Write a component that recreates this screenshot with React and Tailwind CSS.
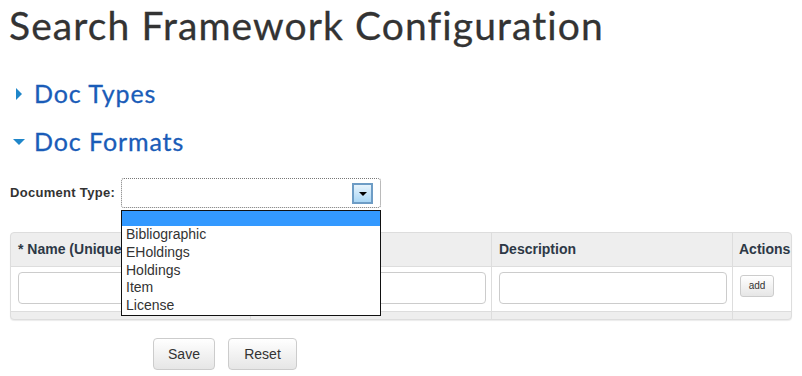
import React from 'react';

const items = ['Bibliographic', 'EHoldings', 'Holdings', 'Item', 'License'];

function Section({ open, label }) {
  return (
    <div className="flex items-center h-[48px] pl-[13px]">
      {open ? (
        <span className="w-0 h-0 border-l-[6px] border-r-[6px] border-t-[6px] border-l-transparent border-r-transparent border-t-[#1f86c9] mr-[9px]" />
      ) : (
        <span className="w-0 h-0 border-t-[6px] border-b-[6px] border-l-[6px] border-t-transparent border-b-transparent border-l-[#1f86c9] ml-[3px] mr-[12px]" />
      )}
      <span className="font-['Lato'] text-[25px] text-[#1a5cb8] tracking-[0.9px] [-webkit-text-stroke:0.3px_#1a5cb8]">{label}</span>
    </div>
  );
}

export default function App() {
  return (
    <div className="relative w-[802px] h-[376px] overflow-hidden bg-white font-['Liberation_Sans',Arial,sans-serif]">
      <h1 className="h-[70px] pl-[9px] pt-[1px] font-['Lato'] text-[39px] leading-[48px] text-[#333] tracking-[1.1px] [-webkit-text-stroke:0.3px_#333]">
        Search Framework Configuration
      </h1>
      <Section label="Doc Types" />
      <Section open label="Doc Formats" />

      <div className="flex items-center h-[30px] mt-[12px] pl-[10px]">
        <label className="w-[111px] text-[13px] font-bold tracking-[0.3px] text-[#333]">Document Type:</label>
        <div className="relative w-[260px] h-[30px] rounded-[3px] border border-dotted border-[#777] bg-white">
          <div className="absolute right-[7px] top-[4px] w-[21px] h-[21px] border-2 border-[#6d9cc5] bg-gradient-to-b from-[#e6f3fc] to-[#a9d6f5] flex items-center justify-center">
            <span className="w-0 h-0 border-l-[4px] border-r-[4px] border-t-[4px] border-l-transparent border-r-transparent border-t-black" />
          </div>
        </div>
      </div>

      <div className="mx-[10px] mt-[24px] rounded-[4px] border border-[#ddd] bg-[#eee] overflow-hidden shadow-[0_1px_1px_rgba(0,0,0,0.08)]">
        <div className="grid grid-cols-[240px_241px_241px_1fr] h-[33px] text-[14px] font-bold text-[#2d3846]">
          <div className="flex items-center pl-[7px] border-r border-[#ddd]">* Name (Unique)</div>
          <div className="flex items-center pl-[7px] border-r border-[#ddd]">Label</div>
          <div className="flex items-center pl-[7px] border-r border-[#ddd]">Description</div>
          <div className="flex items-center pl-[6px]">Actions</div>
        </div>
        <div className="grid grid-cols-[240px_241px_241px_1fr] h-[45px] bg-white border-t border-[#ddd]">
          <div className="border-r border-[#ddd] pl-[7px] pr-[3px] pt-[5px]">
            <div className="h-[32px] rounded-[4px] border border-[#ccc]" />
          </div>
          <div className="border-r border-[#ddd] pl-[7px] pr-[5px] pt-[5px]">
            <div className="h-[32px] rounded-[4px] border border-[#ccc]" />
          </div>
          <div className="border-r border-[#ddd] pl-[7px] pr-[5px] pt-[5px]">
            <div className="h-[32px] rounded-[4px] border border-[#ccc]" />
          </div>
          <div className="pl-[7px] pt-[5px]">
            <button className="w-[34px] h-[22px] rounded-[3px] border border-[#ccc] bg-gradient-to-b from-white to-[#e6e6e6] text-[10px] text-[#333]">add</button>
          </div>
        </div>
        <div className="grid grid-cols-[240px_241px_241px_1fr] h-[8px] border-t border-[#ddd]">
          <div className="border-r border-[#ddd]" />
          <div className="border-r border-[#ddd]" />
          <div className="border-r border-[#ddd]" />
          <div />
        </div>
      </div>

      <div className="flex gap-[13px] pl-[153px] mt-[18px]">
        <button className="w-[62px] h-[32px] rounded-[4px] border border-[#ccc] bg-gradient-to-b from-white to-[#e6e6e6] text-[14px] text-[#333]">Save</button>
        <button className="w-[69px] h-[32px] rounded-[4px] border border-[#ccc] bg-gradient-to-b from-white to-[#e6e6e6] text-[14px] text-[#333]">Reset</button>
      </div>

      <ul className="absolute left-[121px] top-[210px] w-[260px] border border-[#111] bg-white text-[14px] leading-[17.8px] text-[#333]">
        <li className="h-[15px] bg-[#3399ff]" />
        {items.map((it) => (
          <li key={it} className="pl-[4px]">{it}</li>
        ))}
      </ul>
    </div>
  );
}
